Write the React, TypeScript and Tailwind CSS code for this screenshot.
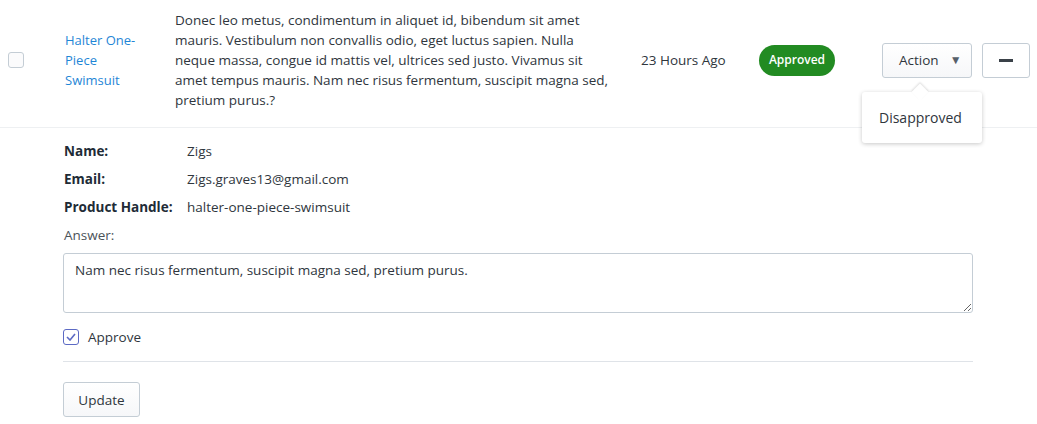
import React from "react";

export default function App() {
  return (
    <div className="w-[1037px] h-[424px] bg-white text-[13.5px] text-[#2f363d] overflow-hidden relative" style={{ fontFamily: '"Open Sans", "Noto Sans", sans-serif' }}>
      {/* Row */}
      <div className="flex items-center pt-[10px] pb-[17px] border-b border-[#eef0f2]">
        <div className="w-[65px] pl-[8px] shrink-0">
          <div className="w-[16px] h-[16px] rounded-[3px] border border-[#c4cdd5] bg-[#fbfbfc]" />
        </div>
        <div className="w-[110px] shrink-0 pr-[30px] leading-[20px] text-[#1f86d6] text-[13px]">Halter One-Piece Swimsuit</div>
        <div className="w-[442px] shrink-0 leading-[20px]">
          Donec leo metus, condimentum in aliquet id, bibendum sit amet mauris. Vestibulum non convallis odio, eget luctus sapien. Nulla neque massa, congue id mattis vel, ultrices sed justo. Vivamus sit amet tempus mauris. Nam nec risus fermentum, suscipit magna sed, pretium purus.?
        </div>
        <div className="w-[24px] shrink-0" />
        <div className="w-[118px] shrink-0">23 Hours Ago</div>
        <div className="w-[123px] shrink-0">
          <span className="inline-flex items-center justify-center w-[76px] h-[31px] rounded-full bg-[#228b22] text-white text-[12px] font-semibold">Approved</span>
        </div>
        <div className="relative">
          <button className="flex items-center w-[90px] h-[35px] rounded-[3px] border border-[#c4cdd5] bg-gradient-to-b from-white to-[#f6f7f9] pl-[16px] text-[13.5px] text-[#2f363d]">
            Action
            <span className="ml-[11px] text-[12px] text-[#56606a]">▼</span>
          </button>
          <div className="absolute left-[-20px] top-[49px] w-[120px] h-[51px] bg-white rounded-[3px] shadow-[0_1px_4px_rgba(0,0,0,0.22)] flex items-center pl-[17px] z-10">
            <div className="absolute left-[52px] top-[-6px] w-[12px] h-[12px] bg-white rotate-45 shadow-[-1px_-1px_2px_rgba(0,0,0,0.12)]" />
            <span className="relative text-[14px]">Disapproved</span>
          </div>
        </div>
        <button className="ml-[10px] w-[48px] h-[35px] rounded-[3px] border border-[#c4cdd5] bg-white flex items-center justify-center">
          <span className="block w-[14px] h-[3px] bg-[#3a4148]" />
        </button>
      </div>

      {/* Details */}
      <div className="pl-[64px] pt-[13px] w-[973px]">
        <div className="flex flex-col gap-[8px] leading-[20px]">
          <div className="flex"><span className="w-[123px] font-bold text-[#212b36]">Name:</span><span>Zigs</span></div>
          <div className="flex"><span className="w-[123px] font-bold text-[#212b36]">Email:</span><span>Zigs.graves13@gmail.com</span></div>
          <div className="flex"><span className="w-[123px] font-bold text-[#212b36]">Product Handle:</span><span>halter-one-piece-swimsuit</span></div>
          <div className="flex"><span className="text-[#4b5259]">Answer:</span></div>
        </div>
        <textarea
          className="mt-[8px] -ml-[1px] block w-[910px] h-[60px] rounded-[3px] border border-[#c4cdd5] px-[11px] py-[6px] text-[13.5px] text-[#2f363d] resize-y"
          defaultValue="Nam nec risus fermentum, suscipit magna sed, pretium purus."
        />
        <div className="flex items-center mt-[14px] -ml-[1px]">
          <span className="w-[16px] h-[16px] rounded-[3px] border border-[#5c6ac4] flex items-center justify-center">
            <svg width="10" height="8" viewBox="0 0 10 8"><path d="M1 4l3 3 5-6" fill="none" stroke="#5c6ac4" strokeWidth="1.6" /></svg>
          </span>
          <span className="ml-[9px]">Approve</span>
        </div>
        <div className="mt-[14px] -ml-[1px] w-[910px] border-t border-[#dfe3e8]" />
        <button className="mt-[20px] -ml-[1px] w-[77px] h-[35px] rounded-[3px] border border-[#c4cdd5] bg-gradient-to-b from-white to-[#f6f7f9] text-[13.5px] text-[#2f363d]">Update</button>
      </div>
    </div>
  );
}
